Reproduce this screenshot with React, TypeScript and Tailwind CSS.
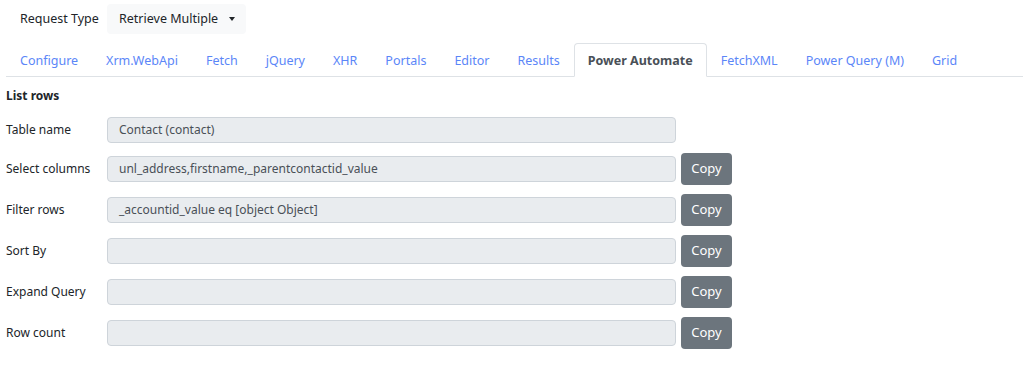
const tabs = [
  "Configure",
  "Xrm.WebApi",
  "Fetch",
  "jQuery",
  "XHR",
  "Portals",
  "Editor",
  "Results",
  "Power Automate",
  "FetchXML",
  "Power Query (M)",
  "Grid",
];

const rows: { label: string; value: string; copy: boolean }[] = [
  { label: "Table name", value: "Contact (contact)", copy: false },
  {
    label: "Select columns",
    value: "unl_address,firstname,_parentcontactid_value",
    copy: true,
  },
  { label: "Filter rows", value: "_accountid_value eq [object Object]", copy: true },
  { label: "Sort By", value: "", copy: true },
  { label: "Expand Query", value: "", copy: true },
  { label: "Row count", value: "", copy: true },
];

export default function App() {
  return (
    <div className="w-[1023px] h-[390px] bg-white font-['Noto_Sans',sans-serif] text-[12px] text-[#212529] overflow-hidden">
      {/* request type */}
      <div className="flex items-center pl-[20px] pt-[4px]">
        <span className="w-[87px] text-[12.5px]">Request Type</span>
        <div className="h-[30px] w-[139px] pl-[12px] pr-[11px] bg-[#f8f9fa] rounded flex items-center justify-between text-[12.5px]">
          <span>Retrieve Multiple</span>
          <span className="w-0 h-0 border-l-[3.5px] border-r-[3.5px] border-t-[4px] border-l-transparent border-r-transparent border-t-[#212529]" />
        </div>
      </div>

      {/* tabs */}
      <div className="mt-[9px] ml-[6px] flex border-b border-[#dee2e6] text-[12.5px]">
        {tabs.map((t) => {
          const active = t === "Power Automate";
          return (
            <div
              key={t}
              className={`h-[34px] px-[13px] pt-[2px] flex items-center border rounded-t -mb-px ${
                active
                  ? "border-[#dee2e6] border-b-white bg-white font-bold text-[#495057]"
                  : "border-transparent text-[#5b86f8]"
              }`}
            >
              {t}
            </div>
          );
        })}
      </div>

      {/* form */}
      <div className="pl-[6px]">
        <div className="pt-[10px] leading-[18px] font-bold">List rows</div>
        <div className="mt-[12px] flex flex-col gap-[9px]">
          {rows.map((r, i) => (
            <div
              key={r.label}
              className={`flex items-center ${i === 0 ? "h-[26px] mb-[1px]" : "h-[32px]"}`}
            >
              <span className="w-[101px]">{r.label}</span>
              <div className="w-[569px] h-[26px] pl-[11px] flex items-center bg-[#e9ecef] border border-[#ced4da] rounded text-[#495057]">
                {r.value}
              </div>
              {r.copy && (
                <button className="ml-[5px] w-[51px] h-[32px] bg-[#6c757d] text-white text-[13px] rounded flex items-center justify-center">
                  Copy
                </button>
              )}
            </div>
          ))}
        </div>
      </div>
    </div>
  );
}
